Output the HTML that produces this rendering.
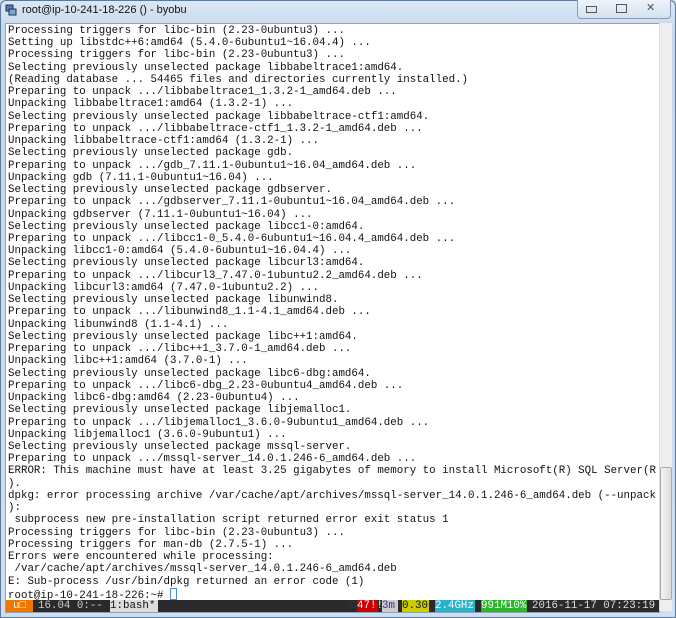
<!DOCTYPE html>
<html><head><style>
body{margin:0;width:676px;height:618px;overflow:hidden;background:#c9dcef;font-family:"Liberation Sans",sans-serif;}
.frame{position:absolute;left:0;top:0;width:674px;height:616px;border:1px solid #5f7a96;border-radius:6px 6px 0 0;background:linear-gradient(#dbe8f6,#c5d8ec 30px,#cddff1);}
.title{position:absolute;left:22px;top:4px;font-size:11px;color:#111;}
.ico{position:absolute;left:5px;top:4px;width:12px;height:12px;}
.btns{position:absolute;right:5px;top:0;width:92px;height:18px;border:1px solid #8a9db3;border-top:none;border-radius:0 0 4px 4px;background:linear-gradient(#eef4fb,#d3e1f0);}
.btns span{position:absolute;top:4px;width:9px;height:7px;border:1px solid #555;}
.term{position:absolute;left:5px;top:23px;width:653px;height:588px;background:#fff;border:1px solid #8ea3b9;overflow:hidden;}
pre{margin:0;padding:1px 0 0 2px;font-family:"Liberation Mono",monospace;font-size:10.8px;line-height:12.24px;color:#111;}
.sb{position:absolute;left:659px;top:23px;width:12px;height:588px;background:#eee;border-left:1px solid #ddd;}
.thumb{position:absolute;left:660px;top:467px;width:10px;height:131px;background:linear-gradient(90deg,#f4f4f4,#dcdcdc);border:1px solid #a9a9a9;border-radius:2px;}
.status{position:absolute;left:0;top:576px;height:12px;width:653px;background:#2a2a2a;white-space:pre;font-family:"Liberation Mono",monospace;font-size:10.8px;line-height:12px;}
.status span{position:absolute;top:0;height:12px;}
</style></head><body>
<div class="frame"></div>
<svg class="ico" viewBox="0 0 12 12"><rect x="1" y="1" width="7" height="6" fill="#4a7fc1" stroke="#234"/><rect x="4" y="5" width="7" height="6" fill="#7aa5d8" stroke="#234"/></svg>
<div class="title">root@ip-10-241-18-226 () - byobu</div>
<div class="btns"><span style="left:8px;height:5px;top:6px"></span><span style="left:38px"></span><span style="left:68px;border:none;color:#555;font-size:11px;top:1px">&#x2715;</span></div>
<div class="term"><pre>Processing triggers for libc-bin (2.23-0ubuntu3) ...
Setting up libstdc++6:amd64 (5.4.0-6ubuntu1~16.04.4) ...
Processing triggers for libc-bin (2.23-0ubuntu3) ...
Selecting previously unselected package libbabeltrace1:amd64.
(Reading database ... 54465 files and directories currently installed.)
Preparing to unpack .../libbabeltrace1_1.3.2-1_amd64.deb ...
Unpacking libbabeltrace1:amd64 (1.3.2-1) ...
Selecting previously unselected package libbabeltrace-ctf1:amd64.
Preparing to unpack .../libbabeltrace-ctf1_1.3.2-1_amd64.deb ...
Unpacking libbabeltrace-ctf1:amd64 (1.3.2-1) ...
Selecting previously unselected package gdb.
Preparing to unpack .../gdb_7.11.1-0ubuntu1~16.04_amd64.deb ...
Unpacking gdb (7.11.1-0ubuntu1~16.04) ...
Selecting previously unselected package gdbserver.
Preparing to unpack .../gdbserver_7.11.1-0ubuntu1~16.04_amd64.deb ...
Unpacking gdbserver (7.11.1-0ubuntu1~16.04) ...
Selecting previously unselected package libcc1-0:amd64.
Preparing to unpack .../libcc1-0_5.4.0-6ubuntu1~16.04.4_amd64.deb ...
Unpacking libcc1-0:amd64 (5.4.0-6ubuntu1~16.04.4) ...
Selecting previously unselected package libcurl3:amd64.
Preparing to unpack .../libcurl3_7.47.0-1ubuntu2.2_amd64.deb ...
Unpacking libcurl3:amd64 (7.47.0-1ubuntu2.2) ...
Selecting previously unselected package libunwind8.
Preparing to unpack .../libunwind8_1.1-4.1_amd64.deb ...
Unpacking libunwind8 (1.1-4.1) ...
Selecting previously unselected package libc++1:amd64.
Preparing to unpack .../libc++1_3.7.0-1_amd64.deb ...
Unpacking libc++1:amd64 (3.7.0-1) ...
Selecting previously unselected package libc6-dbg:amd64.
Preparing to unpack .../libc6-dbg_2.23-0ubuntu4_amd64.deb ...
Unpacking libc6-dbg:amd64 (2.23-0ubuntu4) ...
Selecting previously unselected package libjemalloc1.
Preparing to unpack .../libjemalloc1_3.6.0-9ubuntu1_amd64.deb ...
Unpacking libjemalloc1 (3.6.0-9ubuntu1) ...
Selecting previously unselected package mssql-server.
Preparing to unpack .../mssql-server_14.0.1.246-6_amd64.deb ...
ERROR: This machine must have at least 3.25 gigabytes of memory to install Microsoft(R) SQL Server(R
).
dpkg: error processing archive /var/cache/apt/archives/mssql-server_14.0.1.246-6_amd64.deb (--unpack
):
 subprocess new pre-installation script returned error exit status 1
Processing triggers for libc-bin (2.23-0ubuntu3) ...
Processing triggers for man-db (2.7.5-1) ...
Errors were encountered while processing:
 /var/cache/apt/archives/mssql-server_14.0.1.246-6_amd64.deb
E: Sub-process /usr/bin/dpkg returned an error code (1)
root@ip-10-241-18-226:~# <span style="display:inline-block;width:5px;height:10px;border:1px solid #4a90d9;vertical-align:-2px"></span></pre>
<div class="status"><span style="left:0;width:27px;background:#f07800;color:#fff;text-align:center">u&#x25A1;</span><span style="left:32px;color:#ccc">16.04 0:--</span><span style="left:104px;width:48px;background:#ddd;color:#111">1:bash*</span><span style="left:343px;color:#22f">&#x25A1;</span><span style="left:351px;width:21px;background:#c00;color:#fff">47!!</span><span style="left:376px;width:16px;background:#ccc;color:#33a">3m</span><span style="left:396px;width:27px;background:#cc0;color:#111">0.30</span><span style="left:429px;width:40px;background:#29b3c8;color:#fff">2.4GHz</span><span style="left:475px;width:46px;background:#2bb52b;color:#fff">991M10%</span><span style="left:526px;color:#ddd">2016-11-17 07:23:19</span></div>
</div>
<div class="sb"></div>
<div class="thumb"></div>
</body></html>
